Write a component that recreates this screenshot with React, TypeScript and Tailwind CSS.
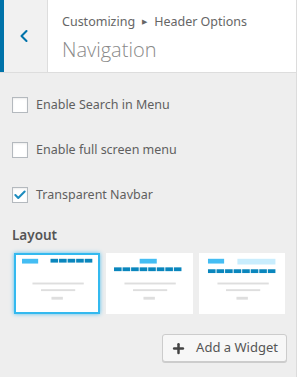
import { ChevronLeft, Plus, Check } from "lucide-react";

type Option = {
  label: string;
  checked: boolean;
};

const options: Option[] = [
  { label: "Enable Search in Menu", checked: false },
  { label: "Enable full screen menu", checked: false },
  { label: "Transparent Navbar", checked: true },
];

const Lines = () => (
  <>
    <rect x="17" y="29" width="54" height="2" fill="#dedede" />
    <rect x="26" y="36" width="36" height="2" fill="#dedede" />
    <rect x="37" y="44" width="12" height="3" fill="#dedede" />
  </>
);

const Dashes = ({ x, y, count }: { x: number; y: number; count: number }) => (
  <>
    {Array.from({ length: count }).map((_, i) => (
      <rect key={i} x={x + i * 9} y={y} width="8" height="4" fill="#0a86bd" />
    ))}
  </>
);

const LayoutThumb = ({ variant, selected }: { variant: number; selected?: boolean }) => (
  <button
    className={
      selected
        ? "h-[61px] border-2 border-[#33b9ef] bg-white shadow-[0_0_4px_rgba(40,180,240,0.8)]"
        : "h-[61px] border-2 border-transparent bg-white"
    }
  >
    <svg viewBox="0 0 86 60" className="block h-full w-full">
      {variant === 0 && (
        <>
          <rect x="6" y="4" width="17" height="5" fill="#44bdf3" />
          <Dashes x={36} y={4} count={5} />
        </>
      )}
      {variant === 1 && (
        <>
          <rect x="33" y="4" width="18" height="5" fill="#44bdf3" />
          <Dashes x={6} y={13} count={8} />
        </>
      )}
      {variant === 2 && (
        <>
          <rect x="7" y="4" width="17" height="5" fill="#44bdf3" />
          <rect x="38" y="4" width="40" height="6" fill="#c9edfd" />
          <Dashes x={7} y={15} count={8} />
        </>
      )}
      <Lines />
    </svg>
  </button>
);

export default function App() {
  return (
    <div
      className="min-h-[377px] w-[297px] border-r border-[#dcdcdc] bg-[#eeeeee] text-[#555d66]"
      style={{ fontFamily: '"Noto Sans", "Open Sans", sans-serif' }}
    >
      <div className="flex h-[73px] border-b border-[#dddddd] bg-white">
        <div className="flex w-[48px] items-center justify-center border-l-4 border-r border-l-[#0073aa] border-r-[#dddddd] bg-[#f1f1f1] pr-[4px] text-[#0073aa]">
          <ChevronLeft size={20} strokeWidth={2.5} />
        </div>
        <div className="flex flex-col pl-[14px] pt-[13px]">
          <div className="flex items-center text-[12.5px] leading-[18px] text-[#666]">
            <span>Customizing</span>
            <span className="mx-[7px] text-[7px]">&#9654;</span>
            <span>Header Options</span>
          </div>
          <div
            className="mt-[6px] text-[20px] font-light leading-[26px] text-[#8a8a8a]"
            style={{ fontFamily: '"Open Sans", "Noto Sans", sans-serif' }}
          >
            Navigation
          </div>
        </div>
      </div>

      <div className="flex flex-col gap-[29px] px-3 pt-[24px]">
        {options.map((o) => (
          <label key={o.label} className="flex h-4 items-center">
            <span className="flex h-4 w-4 items-center justify-center border border-[#b4b9be] bg-white shadow-[inset_0_1px_2px_rgba(0,0,0,0.08)]">
              {o.checked && <Check size={14} strokeWidth={3.5} className="text-[#1e8cbe]" />}
            </span>
            <span className="ml-2 text-[12.5px] text-[#5f5f5f]">{o.label}</span>
          </label>
        ))}
      </div>

      <div className="mt-[22px] px-3 text-[13.5px] font-semibold leading-5 text-[#555]">Layout</div>

      <div className="mt-[8px] grid grid-cols-3 gap-[6px] pl-[14px] pr-[11px]">
        <LayoutThumb variant={0} selected />
        <LayoutThumb variant={1} />
        <LayoutThumb variant={2} />
      </div>

      <div className="mt-[20px] flex justify-end pr-[9px]">
        <button className="flex h-[28px] w-[125px] items-center justify-center gap-[10px] rounded-[3px] border border-[#cccccc] bg-[#f7f7f7] text-[13px] text-[#555] shadow-[0_1px_0_#cccccc]">
          <Plus size={15} strokeWidth={4} className="text-[#444]" />
          <span>Add a Widget</span>
        </button>
      </div>
    </div>
  );
}
